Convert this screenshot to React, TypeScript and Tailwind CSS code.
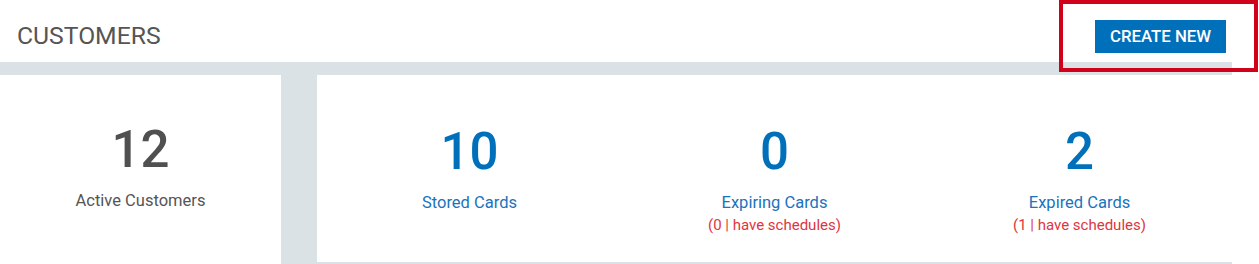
import React from 'react'

interface Stat {
  value: number
  label: string
  note?: string
}

const cardStats: Stat[] = [
  { value: 10, label: 'Stored Cards' },
  { value: 0, label: 'Expiring Cards', note: '(0 | have schedules)' },
  { value: 2, label: 'Expired Cards', note: '(1 | have schedules)' },
]

function StatColumn({ stat }: { stat: Stat }) {
  return (
    <div className="flex flex-1 flex-col items-center">
      <div className="text-[51px] font-medium leading-none text-[#0070ba]">{stat.value}</div>
      <div className="mt-[18px] text-[16.5px] leading-none text-[#1a73bd]">{stat.label}</div>
      {stat.note && (
        <div className="mt-[6px] text-[15px] leading-none text-[#e0353d]">{stat.note}</div>
      )}
    </div>
  )
}

export default function App() {
  return (
    <div className="relative h-[264px] w-[1259px] overflow-hidden bg-white font-['Roboto','Liberation_Sans',sans-serif]">
      <div className="w-[1232px]">
        {/* 标题栏 */}
        <div className="flex h-[62px] items-center justify-between pl-[17px] pr-[6px] pt-[11px]">
          <h1 className="text-[24.7px] font-normal leading-none text-[#555555]">CUSTOMERS</h1>
          <button className="flex h-[33px] w-[131px] items-center justify-center bg-[#0070ba] text-[16.8px] font-medium leading-none text-white">
            CREATE NEW
          </button>
        </div>

        {/* 统计卡片 */}
        <div className="flex items-start bg-[#dbe2e6] pt-[13px]">
          <div className="flex h-[200px] w-[281px] flex-col items-center bg-white pt-[49px]">
            <div className="text-[51px] font-medium leading-none text-[#505050]">12</div>
            <div className="mt-[18px] text-[16.5px] leading-none text-[#555555]">Active Customers</div>
          </div>
          <div className="ml-[36px] flex h-[187px] flex-1 bg-white pt-[51px]">
            {cardStats.map((s) => (
              <StatColumn key={s.label} stat={s} />
            ))}
          </div>
        </div>
      </div>

      {/* 标注框 */}
      <div className="pointer-events-none absolute left-[1059px] top-0 h-[72px] w-[199px] border-4 border-[#d0021b]" />
    </div>
  )
}
